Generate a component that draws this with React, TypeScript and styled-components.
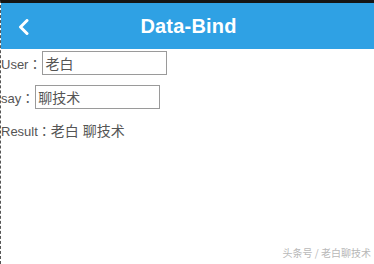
import * as React from "react";
import styled, { createGlobalStyle } from "styled-components";

const GlobalStyle = createGlobalStyle`
  html, body {
    margin: 0;
    padding: 0;
    background: #ffffff;
  }
  body {
    font-family: "Liberation Sans", "Noto Sans CJK TC", sans-serif;
  }
`;

const Screen = styled.div`
  width: 374px;
  height: 264px;
  box-sizing: border-box;
  border-top: 3px solid #151515;
  border-left: 1px dashed #555;
  position: relative;
  overflow: hidden;
  background: #fff;
`;

const Header = styled.div`
  height: 46px;
  background: #2fa1e4;
  display: flex;
  align-items: center;
  justify-content: center;
  position: relative;
`;

const BackButton = styled.div`
  position: absolute;
  left: 16px;
  top: 16px;
  width: 14px;
  height: 16px;
  display: flex;
`;

const Title = styled.div`
  color: #fff;
  font-weight: bold;
  font-size: 20px;
  letter-spacing: 0.2px;
  margin-left: 2px;
`;

const Form = styled.div`
  display: flex;
  flex-direction: column;
  padding-top: 2px;
  color: #555;
`;

const Row = styled.div`
  display: flex;
  align-items: center;
  height: 24px;
  margin-bottom: 10px;
`;

const Label = styled.span`
  font-size: 13px;
  color: #555;
  white-space: pre;
  font-family: "Liberation Sans", "Noto Sans CJK TC", sans-serif;
`;

const Field = styled.input`
  box-sizing: border-box;
  width: 125px;
  height: 24px;
  margin: 0 0 0 1px;
  padding: 0 2px;
  border: 1px solid #9a9a9a;
  outline: none;
  font-family: "Liberation Sans", "Noto Sans CJK SC", sans-serif;
  font-size: 14px;
  color: #555;
  background: #fff;
  caret-color: transparent;
`;

const Result = styled.div`
  display: flex;
  align-items: center;
  margin-top: 1px;
  height: 20px;
`;

const Value = styled.span`
  font-size: 14px;
  color: #555;
  font-family: "Liberation Sans", "Noto Sans CJK SC", sans-serif;
`;

const Watermark = styled.div`
  position: absolute;
  right: 3px;
  bottom: 4px;
  font-size: 10px;
  color: #b8b8b8;
  font-family: "Noto Sans CJK SC", sans-serif;
`;

export default function App() {
  const [user, setUser] = React.useState("老白");
  const [say, setSay] = React.useState("聊技术");

  return (
    <>
      <GlobalStyle />
      <Screen>
        <Header>
          <BackButton>
            <svg width="14" height="16" viewBox="0 0 14 16">
              <path d="M10 1.5 L3.5 8 L10 14.5" fill="none" stroke="#fff" strokeWidth="3" strokeLinecap="round" strokeLinejoin="round" />
            </svg>
          </BackButton>
          <Title>Data-Bind</Title>
        </Header>
        <Form>
          <Row>
            <Label>User：</Label>
            <Field value={user} onChange={(e) => setUser(e.target.value)} />
          </Row>
          <Row>
            <Label>say：</Label>
            <Field value={say} onChange={(e) => setSay(e.target.value)} />
          </Row>
          <Result>
            <Label>Result：</Label>
            <Value>
              {user} {say}
            </Value>
          </Result>
        </Form>
        <Watermark>头条号 / 老白聊技术</Watermark>
      </Screen>
    </>
  );
}
